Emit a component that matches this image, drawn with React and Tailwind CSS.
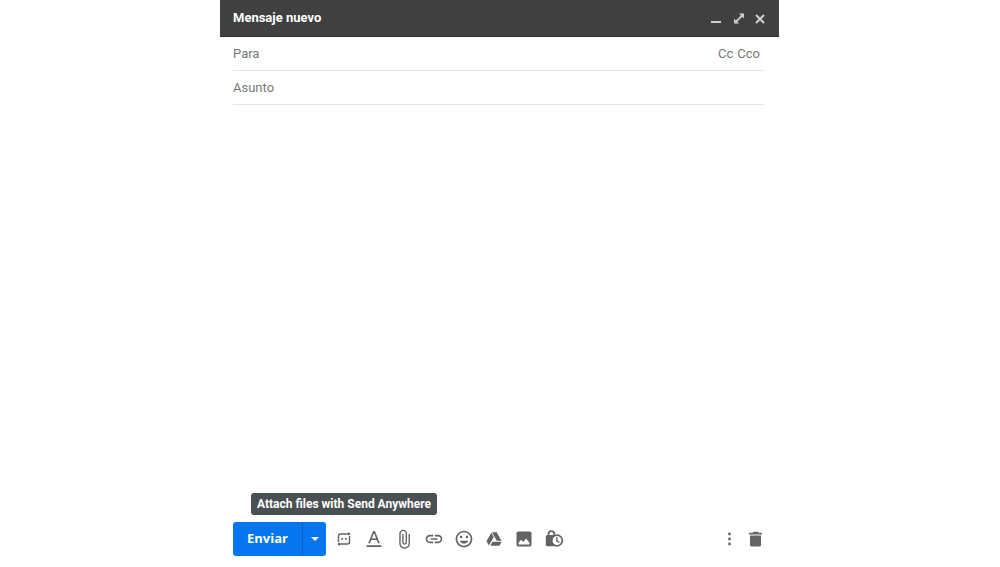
import React, { useState } from "react";

const tools = [
  {
    name: "Formatting options",
    path: "M3 19.5h18v2H3zM8.700 13.200h6.600l1.500 3.800h2.200L13.100 2.500h-2.200L5 17h2.200zM12 4.700l2.600 6.700H9.400z",
  },
  {
    name: "Attach files",
    path: "M17.500 6v11.500c0 2.500-2 4.700-4.700 4.700S8 20 8 17.500V5.500C8 3.800 9.300 2.500 11 2.500s3 1.300 3 3v10.500c0 .8-.5 1.300-1.200 1.300s-1.300-.5-1.300-1.300V6H9.900v10c0 1.600 1.300 2.800 2.900 2.800s2.800-1.200 2.800-2.800V5.500C15.600 3 13.600.9 11 .9S6.300 3 6.300 5.500v12c0 3.500 2.900 6.300 6.500 6.300s6.300-2.800 6.300-6.300V6z",
  },
  {
    name: "Insert link",
    path: "M3.9 12c0-1.71 1.39-3.1 3.1-3.1h4V7H7c-2.76 0-5 2.24-5 5s2.24 5 5 5h4v-1.900H7c-1.71 0-3.1-1.39-3.1-3.1zM8 13h8v-2H8zm9-6h-4v1.9h4c1.71 0 3.1 1.39 3.1 3.1s-1.39 3.1-3.1 3.1h-4V17h4c2.76 0 5-2.24 5-5s-2.24-5-5-5z",
  },
  {
    name: "Insert emoji",
    path: "M11.99 2C6.47 2 2 6.48 2 12s4.47 10 9.99 10C17.52 22 22 17.52 22 12S17.52 2 11.99 2zM12 20c-4.42 0-8-3.58-8-8s3.58-8 8-8 8 3.58 8 8-3.58 8-8 8zm3.5-9c.83 0 1.5-.67 1.5-1.5S16.33 8 15.5 8 14 8.67 14 9.5s.67 1.5 1.5 1.5zm-7 0c.83 0 1.5-.67 1.5-1.5S9.33 8 8.5 8 7 8.67 7 9.5 7.67 11 8.5 11zm3.5 6.5c2.33 0 4.31-1.46 5.11-3.5H6.89c.8 2.04 2.78 3.5 5.11 3.5z",
  },
  {
    name: "Insert from Drive",
    path: "M8.800 4.500 3 14.700l2.900 5.100 5.800-10.200zM10.200 15.200l-2.700 4.800h11l2.700-4.800zM21 14 15.200 3.800H9.600L15.400 14z",
  },
  {
    name: "Insert photo",
    path: "M21 19V5c0-1.1-.9-2-2-2H5c-1.1 0-2 .9-2 2v14c0 1.1.9 2 2 2h14c1.1 0 2-.9 2-2zM5.500 18.500v-2l3-3.500 2.500 2.500 3.500-4 4 5v2z",
  },
];

const Icon = ({ path }) => (
  <svg viewBox="0 0 24 24" className="size-5" fill="currentColor" aria-hidden="true">
    <path d={path} fillRule="evenodd" />
  </svg>
);

const SendAnywhereIcon = () => (
  <svg viewBox="0 0 20 20" className="size-5" fill="none" stroke="currentColor" strokeWidth="1.4" aria-hidden="true">
    <path d="M4.500 13V7c0-1.200.8-2 2-2H16M15.500 7v6c0 1.200-.8 2-2 2H4" />
    <path d="M14 3 16.600 5 14 6.200zM6 13.800 3.400 15 6 17z" fill="currentColor" stroke="none" />
    <path d="M7.200 9h1.800v1.800H7.200zM11 9h1.800v1.800H11z" fill="currentColor" stroke="none" />
  </svg>
);

const ConfidentialIcon = () => (
  <svg viewBox="0 0 20 20" className="size-5" fill="none" stroke="currentColor" aria-hidden="true">
    <path d="M4.500 7V5a2.900 2.900 0 0 1 5.800 0v2" strokeWidth="1.700" />
    <path d="M3.300 6h8.200A1.500 1.500 0 0 1 13 7.500v9.800H3.300a1.500 1.500 0 0 1-1.500-1.500V7.500A1.500 1.500 0 0 1 3.300 6z" fill="currentColor" stroke="none" />
    <circle cx="13" cy="11.500" r="5.300" strokeWidth="1.700" fill="white" />
    <path d="M12.800 8.300v3.500l2.500 1.700" strokeWidth="1.400" />
  </svg>
);

const App = () => {
  const [to, setTo] = useState("");
  const [subject, setSubject] = useState("");
  const [message, setMessage] = useState("");

  return (
    <div className="min-h-screen bg-white flex justify-center pr-px font-[Roboto,sans-serif]">
      <form
        className="w-full max-w-[559px] flex flex-col"
        onSubmit={(e) => e.preventDefault()}
      >
        <header className="h-[37px] pl-[13px] pr-2 flex items-center justify-between bg-[#404040] border-b border-[#303030] text-[#cfcfcf]">
          <h1 className="text-[13px] font-bold text-white">Mensaje nuevo</h1>
          <div className="flex gap-0.5">
            <button type="button" aria-label="Minimizar" className="size-5">
              <svg viewBox="0 0 20 20" className="size-5" stroke="currentColor" strokeWidth="2">
                <path d="M4 14h10" />
              </svg>
            </button>
            <button type="button" aria-label="Pantalla completa" className="size-5">
              <svg viewBox="0 0 20 20" className="size-5" fill="currentColor">
                <path d="M10 5.500h5v5l-1.700-1.700-2.400 2.400-1.400-1.400 2.400-2.400zM5 10.500v5h5l-1.700-1.700 2.400-2.400-1.400-1.400-2.400 2.400z" />
              </svg>
            </button>
            <button type="button" aria-label="Cerrar" className="size-5">
              <svg viewBox="0 0 20 20" className="size-5" stroke="currentColor" strokeWidth="2">
                <path d="m5 7 8 8m0-8-8 8" />
              </svg>
            </button>
          </div>
        </header>

        <div className="pl-[13px] pr-[15px] flex-1 flex flex-col text-[13px] text-[#777777]">
          <div className="h-[34px] flex items-center border-b border-[#e5e5e5]">
            <input
              type="text"
              aria-label="Para"
              placeholder="Para"
              className="flex-1 min-w-0 outline-none placeholder:text-[#777777]"
              value={to}
              onChange={(e) => setTo(e.target.value)}
            />
            <div className="flex gap-1 pr-1">
              <button type="button">Cc</button>
              <button type="button">Cco</button>
            </div>
          </div>
          <div className="h-[34px] flex items-center border-b border-[#e5e5e5]">
            <input
              type="text"
              aria-label="Asunto"
              placeholder="Asunto"
              className="flex-1 min-w-0 outline-none placeholder:text-[#777777]"
              value={subject}
              onChange={(e) => setSubject(e.target.value)}
            />
          </div>
          <textarea
            aria-label="Mensaje"
            className="flex-1 py-3 resize-none outline-none text-[#222222]"
            value={message}
            onChange={(e) => setMessage(e.target.value)}
          />
        </div>

        <footer className="px-[13px] pb-[11px] flex items-center text-[#636363]">
          <div className="h-[34px] flex rounded-[3px] overflow-hidden bg-[#0575f0] text-white">
            <button type="submit" className="w-[69px] text-[13px] font-bold font-[Open_Sans,sans-serif]">
              Enviar
            </button>
            <button
              type="button"
              aria-label="Más opciones de envío"
              className="w-6 flex items-center justify-center border-l border-[#0560c8]"
            >
              <svg viewBox="0 0 8 4" className="w-2 h-1" fill="currentColor">
                <path d="M0 0h8L4 4z" />
              </svg>
            </button>
          </div>

          <div className="ml-2 flex gap-[10px]">
            <div className="relative size-5">
              <button type="button" aria-describedby="send-anywhere-tip" aria-label="Send Anywhere">
                <SendAnywhereIcon />
              </button>
              <div
                id="send-anywhere-tip"
                role="tooltip"
                className="absolute bottom-full left-1/2 -translate-x-1/2 mb-[14px] w-[186px] h-[22px] flex items-center justify-center rounded-[3px] bg-[#4a5052] text-xs font-bold text-white whitespace-nowrap"
              >
                Attach files with Send Anywhere
              </div>
            </div>
            {tools.map((tool) => (
              <button key={tool.name} type="button" aria-label={tool.name} className="size-5">
                <Icon path={tool.path} />
              </button>
            ))}
            <button type="button" aria-label="Confidential mode" className="size-5">
              <ConfidentialIcon />
            </button>
          </div>

          <div className="ml-auto flex gap-[6px]">
            <button type="button" aria-label="Más opciones" className="size-5">
              <svg viewBox="0 0 20 20" className="size-5" fill="currentColor">
                <circle cx="9.500" cy="5" r="1.400" />
                <circle cx="9.500" cy="10" r="1.400" />
                <circle cx="9.500" cy="15" r="1.400" />
              </svg>
            </button>
            <button type="button" aria-label="Descartar borrador" className="size-5">
              <svg viewBox="0 0 20 20" className="size-5" fill="currentColor">
                <path d="M4 6.500h11V16c0 .8-.6 1.400-1.400 1.400H5.400c-.8 0-1.400-.6-1.400-1.400zM3 3.700h3.500l1-1h4l1 1H16v1.700H3z" />
              </svg>
            </button>
          </div>
        </footer>
      </form>
    </div>
  );
};

export default App;
